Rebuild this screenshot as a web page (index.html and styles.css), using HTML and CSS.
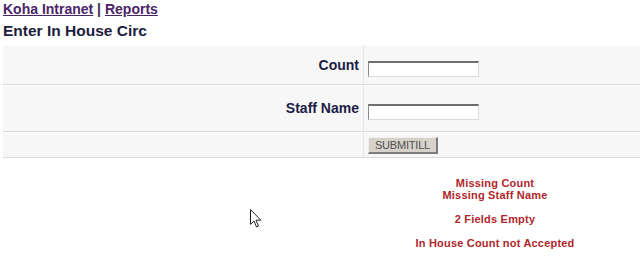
FILE: index.html
```html
<!DOCTYPE html>
<html>
<head>
<meta charset="utf-8">
<link rel="stylesheet" href="styles.css">
</head>
<body>
<div class="crumbs"><a href="#">Koha Intranet</a> | <a href="#">Reports</a></div>
<h1 class="title">Enter In House Circ</h1>
<div class="form">
  <div class="cell label r1">Count</div>
  <div class="cell field r1"><input class="txt" type="text"></div>
  <div class="cell label r2">Staff Name</div>
  <div class="cell field r2"><input class="txt" type="text"></div>
  <div class="cell label r3"></div>
  <div class="cell field r3"><button class="btn" type="button">SUBMITILL</button></div>
</div>
<div class="messages">
  <div class="msg">Missing Count</div>
  <div class="msg">Missing Staff Name</div>
  <div class="msg gap">2 Fields Empty</div>
  <div class="msg gap">In House Count not Accepted</div>
</div>
<svg class="cursor" width="12" height="19" viewBox="0 0 12 19"><path d="M0.5 0.5 L0.5 15.5 L4 12 L6.5 18 L8.5 17 L6 11.2 L10.8 11.2 Z" fill="#fff" stroke="#222" stroke-width="1"/></svg>
</body>
</html>
```
FILE: styles.css
```css
html, body {
  margin: 0;
  background: #fff;
}
body {
  padding: 1px 0 0 3px;
  font-family: "Liberation Sans", Arial, sans-serif;
  position: relative;
  width: 637px;
  height: 263px;
  overflow: hidden;
}
.crumbs {
  font-size: 14px;
  font-weight: bold;
  color: #3a2a55;
  line-height: 17px;
}
.crumbs a {
  color: #4a2468;
  text-decoration: underline;
}
.title {
  margin: 3px 0 0 0;
  font-size: 15.5px;
  line-height: 19px;
  font-weight: bold;
  color: #1c1c3e;
}
.form {
  margin-top: 5px;
  display: grid;
  grid-template-columns: 361px 1fr;
  grid-template-rows: 40px 47px 26px;
  background: #f7f7f7;
}
.cell {
  display: flex;
  align-items: center;
  border-bottom: 1px solid #d9d9d9;
  box-shadow: 0 1px 0 #fff inset;
}
.label {
  justify-content: flex-end;
  padding-right: 4px;
  font-size: 14px;
  font-weight: bold;
  color: #1c1c46;
  border-right: 1px solid #e6e6e6;
}
.field {
  padding-left: 4px;
}
.r1 .txt, .r2 .txt { margin-top: 8px; }
.txt {
  width: 111px;
  height: 16px;
  box-sizing: border-box;
  margin: 0;
  padding: 0;
  background: #fff;
  border-style: solid;
  border-width: 2px 1px 1px 1px;
  border-color: #6f6f6f #dcdcdc #dcdcdc #8a8a8a;
}
.btn {
  width: 70px;
  height: 17px;
  margin: 2px 0 0 0;
  padding: 0;
  background: #d6d2ca;
  border-style: solid;
  border-width: 1px 2px 2px 1px;
  border-color: #f0f0f0 #7c7c7c #7c7c7c #f0f0f0;
  font-family: "Liberation Sans", Arial, sans-serif;
  font-size: 11px;
  color: #505050;
  letter-spacing: -0.2px;
}
.messages {
  margin-top: 19px;
  margin-left: 347px;
  width: 290px;
  display: flex;
  flex-direction: column;
  align-items: center;
}
.msg {
  font-size: 11px;
  font-weight: bold;
  line-height: 12px;
  letter-spacing: 0.2px;
  color: #b0262a;
}
.msg.gap { margin-top: 12px; }
.cursor {
  position: absolute;
  left: 250px;
  top: 209px;
}
```
